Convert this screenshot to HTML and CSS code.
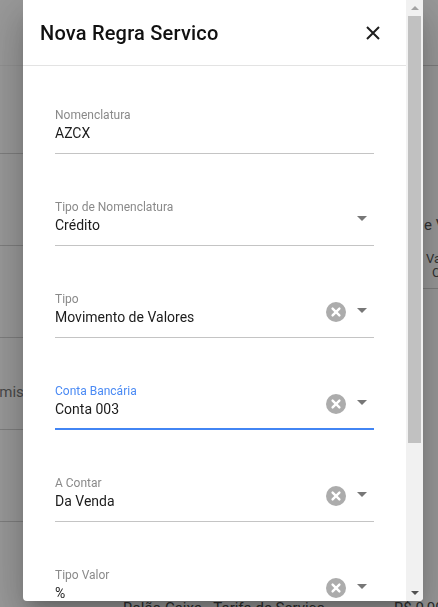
FILE: index.html
```html
<!DOCTYPE html>
<html lang="pt-BR">
<head>
    <meta charset="UTF-8">
    <meta name="viewport" content="width=device-width, initial-scale=1.0">
    <title>Nova Regra Servico</title>
    <link rel="stylesheet" href="styles.css">
</head>
<body>
    <!-- pagina por tras do modal -->
    <div class="page">
        <div class="page-top">
            <div class="page-main">
                <div class="row row-head"></div>
                <div class="row row-short"></div>
                <div class="row"></div>
                <div class="row"></div>
                <div class="row"><span class="cell-cut">Comissão</span></div>
                <div class="row"></div>
            </div>
            <div class="page-side">
                <div class="side-head"></div>
                <div class="side-body">
                    <div class="side-title">e Valor</div>
                    <div class="side-cell">
                        <span>Valor</span>
                        <span class="side-indent">Cobrado</span>
                    </div>
                </div>
            </div>
        </div>
        <div class="page-foot">
            <span class="foot-desc">Rolão Caixa - Tarifa de Serviço</span>
            <span>R$ 0,00</span>
        </div>
    </div>

    <div class="backdrop">
        <div class="dialog">
            <div class="dialog-scroll">
                <div class="dialog-header">
                    <h2 class="dialog-title">Nova Regra Servico</h2>
                    <button class="close-btn" aria-label="Fechar">
                        <svg width="14" height="14" viewBox="0 0 14 14">
                            <path d="M1 1L13 13M13 1L1 13" stroke="#1f1f1f" stroke-width="2" fill="none"/>
                        </svg>
                    </button>
                </div>

                <div class="form">
                    <div class="field">
                        <div class="field-text">
                            <label class="field-label">Nomenclatura</label>
                            <div class="field-value">AZCX</div>
                        </div>
                    </div>

                    <div class="field">
                        <div class="field-text">
                            <label class="field-label">Tipo de Nomenclatura</label>
                            <div class="field-value">Crédito</div>
                        </div>
                        <div class="field-icons">
                            <span class="caret"></span>
                        </div>
                    </div>

                    <div class="field">
                        <div class="field-text">
                            <label class="field-label">Tipo</label>
                            <div class="field-value">Movimento de Valores</div>
                        </div>
                        <div class="field-icons">
                            <svg class="clear" width="20" height="20" viewBox="0 0 20 20">
                                <circle cx="10" cy="10" r="10" fill="#acacac"/>
                                <path d="M6.6 6.6L13.4 13.4M13.4 6.6L6.6 13.4" stroke="#fff" stroke-width="2.4" stroke-linecap="round"/>
                            </svg>
                            <span class="caret"></span>
                        </div>
                    </div>

                    <div class="field focused">
                        <div class="field-text">
                            <label class="field-label">Conta Bancária</label>
                            <div class="field-value">Conta 003</div>
                        </div>
                        <div class="field-icons">
                            <svg class="clear" width="20" height="20" viewBox="0 0 20 20">
                                <circle cx="10" cy="10" r="10" fill="#acacac"/>
                                <path d="M6.6 6.6L13.4 13.4M13.4 6.6L6.6 13.4" stroke="#fff" stroke-width="2.4" stroke-linecap="round"/>
                            </svg>
                            <span class="caret"></span>
                        </div>
                    </div>

                    <div class="field">
                        <div class="field-text">
                            <label class="field-label">A Contar</label>
                            <div class="field-value">Da Venda</div>
                        </div>
                        <div class="field-icons">
                            <svg class="clear" width="20" height="20" viewBox="0 0 20 20">
                                <circle cx="10" cy="10" r="10" fill="#acacac"/>
                                <path d="M6.6 6.6L13.4 13.4M13.4 6.6L6.6 13.4" stroke="#fff" stroke-width="2.4" stroke-linecap="round"/>
                            </svg>
                            <span class="caret"></span>
                        </div>
                    </div>

                    <div class="field">
                        <div class="field-text">
                            <label class="field-label">Tipo Valor</label>
                            <div class="field-value">%</div>
                        </div>
                        <div class="field-icons">
                            <svg class="clear" width="20" height="20" viewBox="0 0 20 20">
                                <circle cx="10" cy="10" r="10" fill="#acacac"/>
                                <path d="M6.6 6.6L13.4 13.4M13.4 6.6L6.6 13.4" stroke="#fff" stroke-width="2.4" stroke-linecap="round"/>
                            </svg>
                            <span class="caret"></span>
                        </div>
                    </div>
                </div>
            </div>

            <!-- barra de rolagem -->
            <div class="scrollbar">
                <div class="scroll-btn"><span class="arrow-up"></span></div>
                <div class="scroll-track">
                    <div class="scroll-thumb"></div>
                </div>
                <div class="scroll-btn scroll-btn-down"><span class="arrow-down"></span></div>
            </div>
        </div>
    </div>
</body>
</html>
```

FILE: styles.css
```css
body {
    font-family: Roboto, "Liberation Sans", Arial, sans-serif;
    margin: 0;
    width: 438px;
    height: 607px;
    overflow: hidden;
    background-color: white;
    color: #222;
}

/* pagina de fundo */
.page {
    display: flex;
    flex-direction: column;
    height: 607px;
}
.page-top {
    display: flex;
    height: 522px;
}
.page-main {
    width: 420px;
    display: flex;
    flex-direction: column;
}
.row {
    height: 91px;
    border-bottom: 1px solid #d2d2d2;
    display: flex;
    align-items: center;
    font-size: 15px;
    color: #7a7a7a;
}
.row-head {
    height: 65px;
    border-bottom-color: #f2f2f2;
}
.row-short {
    height: 87px;
}
.cell-cut {
    margin-left: -19px;
    margin-top: 16px;
}
.page-side {
    flex: 1;
    overflow: hidden;
    white-space: nowrap;
    font-size: 15px;
    color: #555;
}
.side-head {
    height: 65px;
    border-bottom: 1px solid #d2d2d2;
}
.side-body {
    height: 223px;
    border-bottom: 1px solid #d2d2d2;
    padding-top: 149px;
    box-sizing: border-box;
}
.side-title {
    padding-left: 4px;
    line-height: 20px;
}
.side-cell {
    display: flex;
    flex-direction: column;
    margin-top: 17px;
    padding-left: 6px;
    font-size: 13px;
    line-height: 14px;
}
.side-indent {
    padding-left: 6px;
}
.page-foot {
    display: flex;
    padding: 76px 0 0 123px;
    font-size: 15px;
    line-height: 20px;
    color: #4a4a4a;
    white-space: nowrap;
}
.foot-desc {
    width: 271px;
    flex-shrink: 0;
}

/* modal */
.backdrop {
    position: fixed;
    top: 0;
    left: 0;
    right: 0;
    bottom: 0;
    background-color: rgba(0, 0, 0, 0.4);
    display: flex;
    align-items: flex-start;
    padding-left: 23px;
}
.dialog {
    width: 400px;
    height: 601px;
    background-color: white;
    border-radius: 0 0 4px 4px;
    display: flex;
    overflow: hidden;
    box-shadow: 0 11px 15px -7px rgba(0, 0, 0, 0.2),
                0 24px 38px 3px rgba(0, 0, 0, 0.14),
                0 9px 46px 8px rgba(0, 0, 0, 0.12);
}
.dialog-scroll {
    flex: 1;
    overflow: hidden;
}
.dialog-header {
    height: 65px;
    border-bottom: 1px solid #e3e3e3;
    display: flex;
    align-items: center;
    justify-content: space-between;
    padding: 0 26px 0 17px;
}
.dialog-title {
    margin: 0;
    font-size: 20px;
    font-weight: 500;
    color: #111;
    letter-spacing: 0.2px;
}
.close-btn {
    border: none;
    background: none;
    padding: 0;
    width: 14px;
    height: 14px;
    display: flex;
    cursor: pointer;
}

.form {
    display: flex;
    flex-direction: column;
    gap: 46px;
    padding: 42px 32px 0 32px;
}
.field {
    display: flex;
    padding-bottom: 10px;
    border-bottom: 1px solid #c4c4c4;
}
.field.focused {
    padding-bottom: 9px;
    border-bottom: 2px solid #4285f4;
}
.field-text {
    flex: 1;
    display: flex;
    flex-direction: column;
}
.field-label {
    font-size: 12px;
    line-height: 15px;
    color: #8a8a8a;
}
.focused .field-label {
    color: #4a8af4;
}
.field-value {
    font-size: 14px;
    line-height: 20px;
    color: #1c1c1c;
}
.field-icons {
    align-self: flex-end;
    display: flex;
    align-items: center;
    gap: 11px;
    height: 20px;
    margin-bottom: 5px;
    padding-right: 7px;
}
.clear {
    display: block;
}
.caret {
    width: 0;
    height: 0;
    border-left: 5px solid transparent;
    border-right: 5px solid transparent;
    border-top: 5px solid #777;
    margin-bottom: 4px;
}

/* scrollbar falsa */
.scrollbar {
    width: 17px;
    background-color: #f1f1f1;
    display: flex;
    flex-direction: column;
}
.scroll-btn {
    height: 16px;
    display: flex;
    justify-content: center;
    align-items: center;
}
.scroll-btn-down {
    height: 17px;
}
.arrow-up {
    width: 0;
    height: 0;
    border-left: 4px solid transparent;
    border-right: 4px solid transparent;
    border-bottom: 4px solid #a3a3a3;
}
.arrow-down {
    width: 0;
    height: 0;
    border-left: 4px solid transparent;
    border-right: 4px solid transparent;
    border-top: 4px solid #505050;
}
.scroll-track {
    flex: 1;
}
.scroll-thumb {
    height: 427px;
    margin: 0 2px;
    background-color: #c1c1c1;
}
```
